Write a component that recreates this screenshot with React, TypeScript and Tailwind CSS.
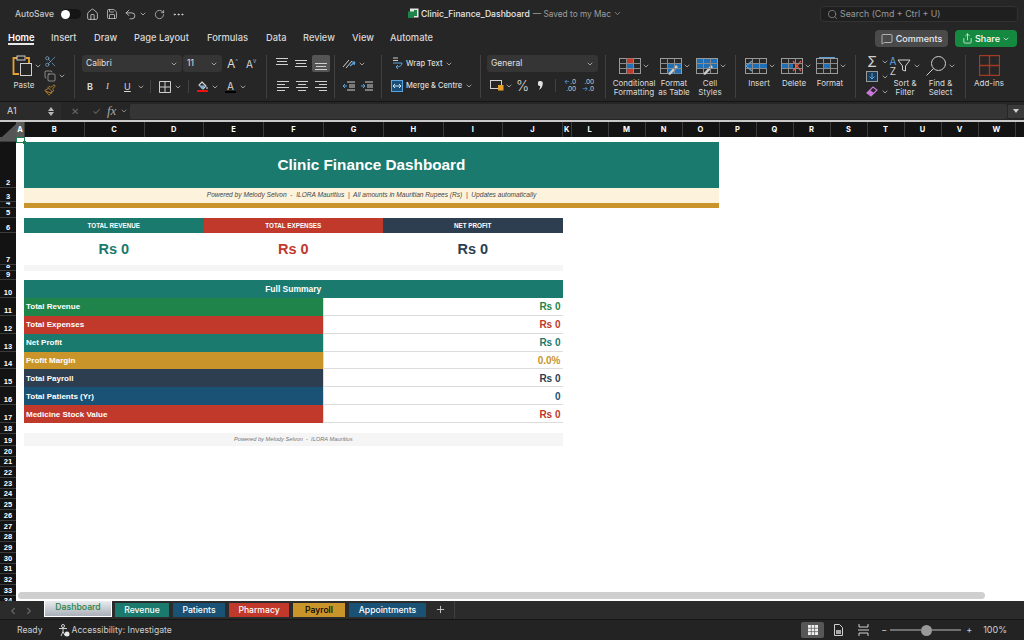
import { ChevronDown, ChevronLeft, ChevronRight, Copy, Ellipsis, House, MessageSquare, Paintbrush, Plus, RotateCw, Save, Scissors, Search, Share, Undo2 } from "lucide-react"
import type { ReactNode } from "react"

const columns = [
  { label: "A", width: "w-[9px] bg-[#5a5a5a]" },
  { label: "B", width: "w-[59.5px]" },
  { label: "C", width: "w-[60px]" },
  { label: "D", width: "w-[59.5px]" },
  { label: "E", width: "w-[60px]" },
  { label: "F", width: "w-[60px]" },
  { label: "G", width: "w-[60px]" },
  { label: "H", width: "w-[59.5px]" },
  { label: "I", width: "w-[59.5px]" },
  { label: "J", width: "w-[60px]" },
  { label: "K", width: "w-[8.5px]" },
  { label: "L", width: "w-[37px]" },
  { label: "M", width: "w-[37px]" },
  { label: "N", width: "w-[37px]" },
  { label: "O", width: "w-[37px]" },
  { label: "P", width: "w-[37px]" },
  { label: "Q", width: "w-[37px]" },
  { label: "R", width: "w-[37px]" },
  { label: "S", width: "w-[37px]" },
  { label: "T", width: "w-[37px]" },
  { label: "U", width: "w-[37px]" },
  { label: "V", width: "w-[37px]" },
  { label: "W", width: "w-[37px]" },
  { label: "", width: "w-[10px]" },
]

const rowHeights = [
  "h-[5px]", "h-[46px]", "h-[14px]", "h-[6px]", "h-[10px]", "h-[15px]", "h-[32px]", "h-[6px]", "h-[9px]", "h-[18px]",
  "h-[17.86px]", "h-[17.86px]", "h-[17.86px]", "h-[17.86px]", "h-[17.86px]", "h-[17.86px]", "h-[17.86px]",
  "h-[10.5px]", "h-[12.5px]",
  "h-[10.7px]", "h-[10.7px]", "h-[10.7px]", "h-[10.7px]", "h-[10.7px]", "h-[10.7px]", "h-[10.7px]", "h-[10.7px]",
  "h-[10.7px]", "h-[10.7px]", "h-[10.7px]", "h-[10.7px]", "h-[10.7px]", "h-[10.7px]", "h-[10.7px]",
]

const summary = [
  { label: "Total Revenue", value: "Rs 0", bg: "bg-[#1e8449]", text: "text-[#1e8449]" },
  { label: "Total Expenses", value: "Rs 0", bg: "bg-[#c0392b]", text: "text-[#c0392b]" },
  { label: "Net Profit", value: "Rs 0", bg: "bg-[#1a7a6e]", text: "text-[#1a7a6e]" },
  { label: "Profit Margin", value: "0.0%", bg: "bg-[#c9952a]", text: "text-[#c9952a]" },
  { label: "Total Payroll", value: "Rs 0", bg: "bg-[#2c3e50]", text: "text-[#2c3e50]" },
  { label: "Total Patients (Yr)", value: "0", bg: "bg-[#1a5276]", text: "text-[#1a5276]" },
  { label: "Medicine Stock Value", value: "Rs 0", bg: "bg-[#c0392b]", text: "text-[#c0392b]" },
]

const tabs = [
  { label: "Revenue", cls: "w-[54px] bg-[#1a7a6e] text-white" },
  { label: "Patients", cls: "w-[52px] bg-[#1a5276] text-white" },
  { label: "Pharmacy", cls: "w-[60px] bg-[#c0392b] text-white" },
  { label: "Payroll", cls: "w-[52px] bg-[#c9952a] text-black" },
  { label: "Appointments", cls: "w-[77px] bg-[#1a5276] text-white" },
]

const tabLabels = ["Home", "Insert", "Draw", "Page Layout", "Formulas", "Data", "Review", "View", "Automate"]

function Chev({ className = "" }: { className?: string }) {
  return <ChevronDown size={8} strokeWidth={2} className={`shrink-0 text-[#d8d8d8] ${className}`} />
}

function Sep() {
  return <div className="w-px h-[43px] shrink-0 bg-[#414141]" />
}

function Label({ children }: { children: ReactNode }) {
  return <div className="text-[8px] leading-[9px] text-center text-[#dcdcdc] whitespace-nowrap">{children}</div>
}

function Lines({ align }: { align: "l" | "c" | "r" }) {
  const xs = align === "l" ? [2, 2, 2, 2] : align === "c" ? [2, 4, 2, 4] : [2, 6, 2, 6]
  return (
    <svg width="16" height="14" viewBox="0 0 16 14" className="text-[#cfcfcf]">
      {[2, 5, 8, 11].map((y, i) => (
        <rect key={y} x={xs[i]} y={y} width={i % 2 === 0 ? 12 : 8} height="1" fill="currentColor" />
      ))}
    </svg>
  )
}

function VLines({ pos }: { pos: "t" | "m" | "b" }) {
  const top = pos === "t" ? 1 : pos === "m" ? 3 : 6
  return (
    <svg width="14" height="13" viewBox="0 0 14 13" className="text-[#cfcfcf]">
      {[0, 3, 6].map((d, i) => (
        <rect key={d} x={i === 1 ? 2 : 1} y={top + d} width={i === 1 ? 10 : 12} height="1" fill="currentColor" />
      ))}
    </svg>
  )
}

function GridBase({ children }: { children?: ReactNode }) {
  return (
    <svg width="22" height="18" viewBox="0 0 22 18" className="shrink-0">
      <rect x="0.5" y="1.5" width="21" height="15" fill="none" stroke="#9a9a9a" />
      {children}
      <path d="M7.5 1.5v15M14.5 1.5v15M.5 6.5h21M.5 11.5h21" stroke="#8a8a8a" fill="none" />
    </svg>
  )
}

function LargeButton({ icon, lines, width, pad = "" }: { icon: ReactNode; lines: string[]; width: string; pad?: string }) {
  return (
    <div className={`${width} shrink-0 flex flex-col items-center`}>
      <div className={`h-[21px] flex items-center gap-[1px] ${pad}`}>
        {icon}
        <Chev />
      </div>
      <div className="mt-[3px]">
        {lines.map((l) => (
          <Label key={l}>{l}</Label>
        ))}
      </div>
    </div>
  )
}

function TitleBar() {
  return (
    <div className="h-[26px] pt-[2px] flex items-center text-[#dcdcdc]">
      <span className="ml-[15px] text-[8.5px] font-medium text-[#c8c8c8]">AutoSave</span>
      <div className="ml-[7px] w-[20px] h-[10px] rounded-full bg-[#151515] flex items-center">
        <div className="w-[9px] h-[9px] rounded-full bg-white" />
      </div>
      <House size={13} strokeWidth={1.4} className="ml-[5px]" />
      <Save size={12} strokeWidth={1.4} className="ml-[7px]" />
      <Undo2 size={13} strokeWidth={1.4} className="ml-[6px]" />
      <ChevronDown size={8} className="ml-[2px]" />
      <RotateCw size={11} strokeWidth={1.4} className="ml-[7px]" />
      <Ellipsis size={13} strokeWidth={1.6} className="ml-[7px]" />
      <div className="ml-[223px] flex items-center">
        <svg width="11" height="11" viewBox="0 0 11 11">
          <rect x="2" y="0.5" width="8.5" height="9" fill="#e8e8e8" />
          <rect x="6" y="2" width="3" height="6" fill="#1e8449" />
          <rect x="0" y="3.5" width="6" height="6.5" fill="#1e8449" />
        </svg>
        <span className="ml-[2px] text-[8.6px] font-medium text-[#e6e6e6]">Clinic_Finance_Dashboard</span>
        <span className="ml-[3px] text-[8.3px] text-[#9e9e9e]">— Saved to my Mac</span>
        <ChevronDown size={9} className="ml-[2px] text-[#9e9e9e]" />
      </div>
      <div className="ml-auto mr-[6px] w-[198px] h-[16px] rounded-[4px] border border-[#333] bg-[#1f1f1f] flex items-center">
        <Search size={11} strokeWidth={1.5} className="ml-[6px] text-[#9a9a9a]" />
        <span className="ml-[2px] text-[8.8px] text-[#9a9a9a]">Search (Cmd + Ctrl + U)</span>
      </div>
    </div>
  )
}

function TabRow() {
  const widths = ["w-[43px]", "w-[43px]", "w-[40px]", "w-[73px]", "w-[59px]", "w-[37px]", "w-[49px]", "w-[38px]", "w-[60px]"]
  return (
    <div className="h-[22px] flex items-start">
      <div className="ml-[8px] flex">
        {tabLabels.map((t, i) => (
          <div key={t} className={`${widths[i]} shrink-0 flex flex-col`}>
            <span className={`text-[9.3px] leading-[23px] h-[22px] ${i === 0 ? "font-semibold text-white" : "font-medium text-[#d8d8d8]"}`}>{t}</span>
            {i === 0 && <div className="-mt-[5px] w-[26px] h-[2px] bg-[#e8e8e8]" />}
          </div>
        ))}
      </div>
      <div className="ml-auto mr-[7px] flex items-center gap-[7px] mt-[4px]">
        <div className="w-[73px] h-[17px] rounded-[4px] bg-[#4a4a4a] flex items-center justify-center gap-[3px] text-[#eaeaea]">
          <MessageSquare size={12} strokeWidth={1.3} />
          <span className="text-[9px] font-medium">Comments</span>
        </div>
        <div className="w-[62px] h-[17px] rounded-[4px] bg-[#15893f] flex items-center justify-center gap-[2px] text-white">
          <Share size={11} strokeWidth={1.5} />
          <span className="text-[9px] font-medium">Share</span>
          <ChevronDown size={8} />
        </div>
      </div>
    </div>
  )
}

function Select({ label, width }: { label: string; width: string }) {
  return (
    <div className={`${width} h-[17px] rounded-[3px] bg-[#353535] flex items-center justify-between px-[4px] text-[8.5px] text-[#e0e0e0] shrink-0`}>
      <span>{label}</span>
      <Chev />
    </div>
  )
}

function Ribbon() {
  return (
    <div className="h-[53px] flex items-start pt-[7px]">
      {/* clipboard */}
      <div className="w-[74px] shrink-0 flex pl-[12px]">
        <div className="w-[30px] shrink-0">
          <div className="flex items-center h-[21px]">
            <svg width="21" height="22" viewBox="0 0 21 22" className="shrink-0">
              <path d="M5 3H1.500v16H7M14 3h3v5" fill="none" stroke="#e8a030" strokeWidth="1.800" />
              <rect x="5" y="1" width="8" height="4" fill="none" stroke="#cfcfcf" />
              <rect x="8.500" y="8.500" width="11" height="12" fill="#262626" stroke="#cfcfcf" />
            </svg>
            <Chev className="ml-[1px]" />
          </div>
          <div className="w-[24px] mt-[5px]">
            <Label>Paste</Label>
          </div>
        </div>
        <div className="ml-[1px] flex flex-col gap-[2px] text-[#cfcfcf]">
          <Scissors size={13} strokeWidth={1.2} className="ml-[1px] text-[#7fb2dc]" />
          <div className="flex items-center">
            <Copy size={12} strokeWidth={1.2} className="ml-[1px]" />
            <Chev className="ml-[2px]" />
          </div>
          <Paintbrush size={12} strokeWidth={1.4} className="ml-[1px] text-[#e8a030]" />
        </div>
      </div>
      <Sep />
      {/* font */}
      <div className="w-[191px] shrink-0 pl-[7px] text-[#d8d8d8]">
        <div className="flex items-center">
          <Select label="Calibri" width="w-[100px]" />
          <div className="w-px" />
          <Select label="11" width="w-[39px]" />
          <span className="ml-[5px] text-[12px] leading-none">A</span>
          <span className="text-[6px] text-[#7fb2dc] -mt-[6px]">^</span>
          <span className="ml-[8px] text-[10px] leading-none">A</span>
          <span className="text-[6px] text-[#7fb2dc] -mt-[6px]">v</span>
        </div>
        <div className="mt-[6px] flex items-center h-[17px] text-[9px]">
          <span className="ml-[5px] w-[18px] font-bold">B</span>
          <span className="ml-[1px] w-[18px] italic" style={{ fontFamily: "Liberation Serif, serif" }}>I</span>
          <span className="underline w-[12px]">U</span>
          <Chev className="ml-[1px]" />
          <div className="ml-[5px] w-px h-[13px] bg-[#414141]" />
          <svg width="12" height="12" viewBox="0 0 12 12" className="ml-[8px]">
            <path d="M.5.5h11v11H.5zM6 .5v11M.5 6h11" fill="none" stroke="#cfcfcf" />
          </svg>
          <Chev className="ml-[3px]" />
          <div className="ml-[6px] w-px h-[13px] bg-[#414141]" />
          <div className="ml-[8px] flex flex-col items-center">
            <svg width="11" height="9" viewBox="0 0 11 9">
              <path d="M5 1l4 4-3 3-4-4zM10 6v2" fill="none" stroke="#dcdcdc" strokeWidth="1.1" />
              <path d="M2 4.500h6l-2 3.500-1 0z" fill="#7fb2dc" />
            </svg>
            <div className="w-[11px] h-[2px] bg-[#ee1111]" />
          </div>
          <Chev className="ml-[3px]" />
          <div className="ml-[6px] flex flex-col items-center">
            <span className="text-[10px] leading-[10px]">A</span>
            <div className="w-[11px] h-[2px] bg-black" />
          </div>
          <Chev className="ml-[3px]" />
        </div>
      </div>
      <Sep />
      {/* alignment */}
      <div className="w-[67px] shrink-0 pl-[8px]">
        <div className="flex items-center gap-[4px] h-[17px]">
          <VLines pos="t" />
          <div className="ml-[1px]"><VLines pos="m" /></div>
          <div className="w-[18px] h-[17px] bg-[#555] rounded-[2px] flex items-center justify-center">
            <VLines pos="b" />
          </div>
        </div>
        <div className="mt-[5px] flex items-center gap-[3px] h-[17px]">
          <Lines align="l" />
          <Lines align="c" />
          <Lines align="r" />
        </div>
      </div>
      <Sep />
      {/* orientation */}
      <div className="w-[46px] shrink-0 pl-[7px]">
        <div className="flex items-center h-[17px] gap-[1px]">
          <svg width="15" height="13" viewBox="0 0 15 13">
            <path d="M1 10L7 3M4 11l6-7" stroke="#cfcfcf" fill="none" />
            <path d="M8 9l5-4M13 5l-3 0M13 5l-1 3" stroke="#5aa5e0" fill="none" strokeWidth="1.2" />
          </svg>
          <Chev />
        </div>
        <div className="mt-[5px] flex items-center h-[17px] gap-[4px]">
          {[0, 1].map((k) => (
            <svg key={k} width="14" height="12" viewBox="0 0 14 12">
              <path d="M5 2h8M7 5h6M7 7h6M5 10h8" stroke="#cfcfcf" fill="none" />
              <path d={k === 0 ? "M5 6H1M1 6l2-2M1 6l2 2" : "M1 6h4M5 6L3 4M5 6L3 8"} stroke="#5aa5e0" fill="none" />
            </svg>
          ))}
        </div>
      </div>
      <Sep />
      {/* wrap and merge */}
      <div className="w-[98px] shrink-0 pl-[9px] text-[7.5px] font-medium text-[#dcdcdc]">
        <div className="flex items-center h-[17px]">
          <svg width="12" height="13" viewBox="0 0 12 13" className="shrink-0">
            <path d="M2 6h9M11 6c0 3-3 4-6 4M5 10l2-2M5 10l2 2" fill="none" stroke="#5aa5e0" />
            <path d="M2 1h5M2 3.500h5" stroke="#cfcfcf" />
          </svg>
          <span className="ml-[3px]">Wrap Text</span>
          <Chev className="ml-[3px]" />
        </div>
        <div className="mt-[5px] flex items-center h-[17px]">
          <svg width="12" height="12" viewBox="0 0 12 12" className="shrink-0">
            <rect x=".5" y=".5" width="11" height="11" fill="#1a4e78" stroke="#5aa5e0" />
            <path d="M2 6h8M2 6l2-2M2 6l2 2M10 6L8 4M10 6L8 8" stroke="#cfe4f5" fill="none" />
          </svg>
          <span className="ml-[3px]">Merge &amp; Centre</span>
          <Chev className="ml-[3px]" />
        </div>
      </div>
      <Sep />
      {/* number */}
      <div className="w-[124px] shrink-0 pl-[6px] text-[#d8d8d8]">
        <Select label="General" width="w-[111px]" />
        <div className="mt-[5px] flex items-center h-[17px]">
          <svg width="14" height="11" viewBox="0 0 14 11" className="ml-[3px]">
            <rect x=".5" y=".5" width="11" height="8" fill="none" stroke="#cfcfcf" />
            <rect x="8" y="5" width="5.500" height="5.500" fill="#e8a030" />
          </svg>
          <Chev className="ml-[1px]" />
          <span className="ml-[3px] text-[14px] font-light leading-none">%</span>
          <svg width="5" height="9" viewBox="0 0 5 9" className="ml-[9px]">
            <path d="M2.500 0a2.300 2.300 0 0 1 2.300 2.500C4.800 5 3.500 7.500 1 9c1-2 1.300-3 1-4A2.500 2.500 0 0 1 2.500 0z" fill="#e0e0e0" />
          </svg>
          <div className="ml-[12px] w-px h-[13px] bg-[#414141]" />
          <div className="ml-[6px] w-[14px] text-[6.5px] leading-[6.5px] text-right">
            <span className="text-[#5aa5e0]">←</span>.0<br />.00
          </div>
          <div className="ml-[4px] w-[14px] text-[6.5px] leading-[6.5px] text-right">
            .00<br /><span className="text-[#5aa5e0]">→</span>.0
          </div>
        </div>
      </div>
      <Sep />
      {/* styles */}
      <div className="w-[129px] shrink-0 flex pl-[4px]">
        <LargeButton
          width="w-[48px]"
          lines={["Conditional", "Formatting"]}
          icon={
            <GridBase>
              <rect x="7" y="1.500" width="8" height="5" fill="#c0392b" />
              <rect x="7" y="6.500" width="8" height="5" fill="#1e6fb5" />
              <rect x="7" y="11.500" width="8" height="5" fill="#c0392b" />
            </GridBase>
          }
        />
        <LargeButton
          width="w-[32px]"
          pad="pl-[2px]"
          lines={["Format", "as Table"]}
          icon={
            <GridBase>
              <rect x="7" y="6.500" width="14" height="10" fill="#1e6fb5" />
              <path d="M8 17l8-9 2 2-8 8z" fill="#cfcfcf" />
            </GridBase>
          }
        />
        <LargeButton
          width="w-[40px]"
          pad="pl-[2px]"
          lines={["Cell", "Styles"]}
          icon={
            <GridBase>
              <rect x="1" y="2" width="20" height="9" fill="#1e6fb5" />
              <path d="M7 17l8-9 2 2-8 8z" fill="#cfcfcf" />
            </GridBase>
          }
        />
      </div>
      <Sep />
      {/* cells */}
      <div className="w-[119px] shrink-0 flex">
        <LargeButton
          width="w-[46px]"
          pad="pl-[2px]"
          lines={["Insert"]}
          icon={
            <GridBase>
              <rect x="3" y="6.500" width="19" height="5" fill="#1e6fb5" />
              <path d="M7 4L1 9l6 5" fill="none" stroke="#5aa5e0" strokeWidth="1.400" />
            </GridBase>
          }
        />
        <LargeButton
          width="w-[24px]"
          pad="pl-[4px]"
          lines={["Delete"]}
          icon={
            <GridBase>
              <rect x="1" y="6.500" width="11" height="5" fill="#1e6fb5" />
              <path d="M12 4l8 10M20 4l-8 10" stroke="#e25545" strokeWidth="1.300" />
            </GridBase>
          }
        />
        <LargeButton
          width="w-[48px]"
          pad="pl-[2px]"
          lines={["Format"]}
          icon={
            <GridBase>
              <rect x="7" y="6.500" width="8" height="5" fill="#1e6fb5" />
              <path d="M3 .5h16" stroke="#5aa5e0" />
            </GridBase>
          }
        />
      </div>
      <Sep />
      {/* editing */}
      <div className="w-[109px] shrink-0 flex pl-[10px]">
        <div className="w-[25px] shrink-0 flex flex-col gap-[2px] text-[#cfcfcf]">
          <div className="flex items-center h-[13px]">
            <span className="text-[14px] w-[12px] leading-none text-center">Σ</span>
            <Chev className="ml-[3px]" />
          </div>
          <div className="flex items-center h-[13px]">
            <svg width="12" height="11" viewBox="0 0 12 11">
              <rect x=".5" y=".5" width="11" height="10" fill="#1a3d5c" stroke="#9a9a9a" />
              <path d="M6 2v6M3.500 5.500L6 8l2.500-2.500" stroke="#5aa5e0" fill="none" />
            </svg>
            <Chev className="ml-[3px]" />
          </div>
          <div className="flex items-center h-[13px]">
            <svg width="12" height="11" viewBox="0 0 12 11">
              <path d="M1 7l6-6 4 3-6 6z" fill="none" stroke="#c879d8" strokeWidth="1.200" />
              <path d="M1 7l3-3 4 3-3 3z" fill="#c879d8" />
            </svg>
            <Chev className="ml-[3px]" />
          </div>
        </div>
        <div className="w-[36px] shrink-0 ml-[-4px] flex flex-col items-center">
          <div className="h-[21px] flex items-center">
            <div className="flex flex-col text-[10px] leading-[10px] w-[8px] text-center">
              <span className="text-[#5aa5e0]">A</span>
              <span className="text-[#cfcfcf]">Z</span>
            </div>
            <svg width="14" height="15" viewBox="0 0 14 15">
              <path d="M1 2h12L8.500 8v5l-3-1V8z" fill="none" stroke="#cfcfcf" />
            </svg>
            <Chev className="ml-[2px]" />
          </div>
          <div className="mt-[3px]">
            <Label>Sort &amp;</Label>
            <Label>Filter</Label>
          </div>
        </div>
        <LargeButton
          width="w-[35px]"
          lines={["Find &", "Select"]}
          icon={
            <svg width="22" height="22" viewBox="0 0 22 22" className="shrink-0">
              <circle cx="13.500" cy="8.500" r="7" fill="none" stroke="#cfcfcf" />
              <path d="M8.500 13.500L1.500 20.500" stroke="#cfcfcf" />
            </svg>
          }
        />
      </div>
      <Sep />
      {/* add-ins */}
      <div className="w-[46px] shrink-0 flex flex-col items-center">
        <div className="h-[21px] flex items-center">
          <svg width="21" height="21" viewBox="0 0 21 21">
            <path d="M.5.5h20v20H.5zM10.500.5v20M.5 10.500h20" fill="none" stroke="#a33a22" strokeWidth="1.300" />
          </svg>
        </div>
        <div className="mt-[3px]">
          <Label>Add-ins</Label>
        </div>
      </div>
    </div>
  )
}

function FormulaBar() {
  return (
    <div className="h-[19px] flex items-center bg-[#262626] border-t border-[#151515]">
      <div className="w-[61px] h-[18px] bg-[#2b2b2b] flex items-center justify-between px-[7px] text-[9px] text-[#dcdcdc]">
        <span>A1</span>
        <div className="flex flex-col gap-[1px]">
          <div className="w-0 h-0 border-x-[3px] border-x-transparent border-b-[4px] border-b-[#b8b8b8]" />
          <div className="w-0 h-0 border-x-[3px] border-x-transparent border-t-[4px] border-t-[#b8b8b8]" />
        </div>
      </div>
      <span className="ml-[10px] w-[21px] text-[10px] text-[#6a6a6a]">✕</span>
      <span className="w-[12px] text-[10px] text-[#6a6a6a]">✓</span>
      <span className="ml-[3px] w-[12px] text-[13px] italic text-[#a8a8a8]" style={{ fontFamily: "Liberation Serif, serif" }}>fx</span>
      <ChevronDown size={8} className="ml-[1px] text-[#b8b8b8]" />
      <div className="ml-[2px] w-[878px] h-[15px] rounded-[2px] bg-[#353535]" />
      <div className="ml-[1px] w-[16px] h-[13px] bg-[#3a3a3a] flex items-center justify-center">
        <div className="w-0 h-0 border-x-[3px] border-x-transparent border-t-[4px] border-t-[#d0d0d0]" />
      </div>
    </div>
  )
}

function ColumnHeaders() {
  return (
    <div className="h-[17px] flex bg-[#131313] border-t-2 border-[#c8c8c8]">
      <div className="w-[16px] shrink-0 flex items-end justify-end bg-[#131313]">
        <div className="w-0 h-0 border-l-[14px] border-l-transparent border-b-[13px] border-b-[#555]" />
      </div>
      {columns.map((c) => (
        <div key={c.label + c.width} className={`${c.width} shrink-0 flex items-center justify-center border-r border-[#3c3c3c] text-[7.5px] font-bold text-white`}>
          {c.label}
        </div>
      ))}
    </div>
  )
}

function RowHeaders() {
  return (
    <div className="w-[16px] shrink-0 h-full overflow-hidden bg-[#131313]">
      {rowHeights.map((h, i) => (
        <div key={i} className={`${h} overflow-hidden flex items-end justify-center border-b border-[#3c3c3c] text-[7.5px] leading-[9px] font-bold text-white ${i === 0 ? "bg-[#555]" : ""}`}>
          {i === 0 ? "" : i + 1}
        </div>
      ))}
    </div>
  )
}

function KpiCard({ title, value, bg, text }: { title: string; value: string; bg: string; text: string }) {
  return (
    <div className="flex-1">
      <div className={`${bg} h-[15px] flex items-center justify-center text-[6.3px] font-bold text-white`}>{title}</div>
      <div className={`h-[32px] pt-[1px] flex items-center justify-center text-[14.500px] font-bold ${text}`}>{value}</div>
    </div>
  )
}

function Sheet() {
  return (
    <div className="h-[464px] flex relative bg-white overflow-hidden" style={{ fontFamily: "Liberation Sans, Arial, sans-serif" }}>
      <RowHeaders />
      <div className="flex-1 pl-[8px] pt-[5px]">
        <div className="w-[695px]">
          <div className="h-[46px] pt-[1px] bg-[#1a7a6e] flex items-center justify-center text-[15.300px] font-bold text-white">Clinic Finance Dashboard</div>
          <div className="h-[14px] bg-[#fdf3dc] flex items-center justify-center text-[6.600px] italic text-[#444] whitespace-pre">
            {"Powered by Melody Selvon  -  ILORA Mauritius  |  All amounts in Mauritian Rupees (Rs)  |  Updates automatically"}
          </div>
          <div className="h-[6px] bg-[#c9952a] border-t border-[#fdf3dc]" />
        </div>
        <div className="w-[538.500px] mt-[10px]">
          <div className="flex">
            <KpiCard title="TOTAL REVENUE" value="Rs 0" bg="bg-[#1a7a6e]" text="text-[#1a7a6e]" />
            <KpiCard title="TOTAL EXPENSES" value="Rs 0" bg="bg-[#c0392b]" text="text-[#c0392b]" />
            <KpiCard title="NET PROFIT" value="Rs 0" bg="bg-[#2c3e50]" text="text-[#2c3e50]" />
          </div>
          <div className="h-[6px] bg-[#f5f5f5]" />
          <div className="mt-[9px] h-[18px] bg-[#1a7a6e] flex items-center justify-center text-[8.500px] font-bold text-white">Full Summary</div>
          {summary.map((r) => (
            <div key={r.label} className="h-[17.860px] flex">
              <div className={`${r.bg} w-[299px] pt-[1px] flex items-center pl-[2px] text-[8px] font-bold text-white`}>{r.label}</div>
              <div className={`flex-1 pt-[1px] flex items-center justify-end pr-[2px] text-[10px] font-bold border-b border-l border-[#dcdcdc] ${r.text}`}>{r.value}</div>
            </div>
          ))}
          <div className="mt-[10px] h-[13px] bg-[#f5f5f5] flex items-center justify-center text-[5.700px] italic text-[#777] whitespace-pre">
            {"Powered by Melody Selvon  -  ILORA Mauritius"}
          </div>
        </div>
      </div>
      {/* A1 selection */}
      <div className="absolute left-[16px] top-0 w-[9px] h-[6px] border border-[#1e7b52]" />
      <div className="absolute left-[23px] top-[4px] w-[3px] h-[3px] bg-[#1e7b52]" />
      {/* scroll bar */}
      <div className="absolute left-[18px] top-[455px] w-[967px] h-[7px] rounded-full bg-[#cfcfcf]" />
    </div>
  )
}

function SheetTabs() {
  return (
    <div className="h-[19px] flex items-start bg-[#2b2b2b] border-b border-[#161616]">
      <ChevronLeft size={10} strokeWidth={3} className="ml-[8px] mt-[5px] text-[#666]" />
      <ChevronRight size={10} strokeWidth={3} className="ml-[6px] mt-[5px] text-[#666]" />
      <div className="ml-[10px] -mt-px w-[68px] h-[17px] border border-white border-t-0 bg-gradient-to-b from-[#eef0f2] to-[#aab0b8] flex items-center justify-center text-[8.700px] font-medium text-[#1e8449]">
        Dashboard
      </div>
      <div className="ml-[3px] flex gap-[4px] pt-[2px]">
        {tabs.map((t) => (
          <div key={t.label} className={`${t.cls} h-[14px] flex items-center justify-center text-[8.600px] font-medium`}>
            {t.label}
          </div>
        ))}
      </div>
      <div className="w-[28px] h-[17px] flex items-center justify-center text-[#cfcfcf] border-r border-[#414141] ml-[1px]">
        <Plus size={11} strokeWidth={2} />
      </div>
    </div>
  )
}

function StatusBar() {
  return (
    <div className="h-[20px] flex items-center bg-[#232323] text-[8.600px] text-[#d0d0d0]">
      <span className="ml-[17px]">Ready</span>
      <svg width="12" height="13" viewBox="0 0 12 13" className="ml-[16px]">
        <circle cx="5" cy="2" r="1.500" fill="none" stroke="#d0d0d0" />
        <path d="M1 4.500h8M5 4.500v3L3 12M5 7.500l2 4" fill="none" stroke="#d0d0d0" />
        <circle cx="9" cy="10" r="2.500" fill="#e8e8e8" />
      </svg>
      <span className="ml-[1px]">Accessibility: Investigate</span>
      <div className="ml-auto w-[23px] h-[16px] rounded-[2px] bg-[#575757] flex items-center justify-center">
        <svg width="10" height="10" viewBox="0 0 10 10">
          <path d="M0 0h10v10H0z" fill="#f0f0f0" />
          <path d="M3.300 0v10M6.600 0v10M0 3.300h10M0 6.600h10" stroke="#575757" strokeWidth=".7" />
        </svg>
      </div>
      <svg width="9" height="12" viewBox="0 0 9 12" className="ml-[10px]">
        <path d="M.5.500h5l3 3v8h-8z" fill="none" stroke="#d0d0d0" />
        <path d="M2 6h5v4H2z" fill="#a8a8a8" />
      </svg>
      <svg width="11" height="12" viewBox="0 0 11 12" className="ml-[15px]">
        <path d="M1 0v3h9V0M1 12V9h9v3M0 6h11" fill="none" stroke="#d0d0d0" />
      </svg>
      <span className="ml-[12px] text-[9px]">−</span>
      <div className="ml-[3px] w-[71px] h-[12px] flex items-center">
        <div className="w-[31px] h-[2px] bg-[#6e6e6e]" />
        <div className="w-[11px] h-[11px] rounded-full bg-[#9a9a9a]" />
        <div className="flex-1 h-[2px] bg-[#6e6e6e]" />
      </div>
      <span className="ml-[5px] text-[9px]">+</span>
      <span className="ml-[11px] mr-[17px] text-[9px]">100%</span>
    </div>
  )
}

export default function App() {
  return (
    <div className="w-[1024px] h-[640px] overflow-hidden bg-[#262626]" style={{ fontFamily: "Inter, sans-serif" }}>
      <TitleBar />
      <TabRow />
      <Ribbon />
      <FormulaBar />
      <ColumnHeaders />
      <Sheet />
      <SheetTabs />
      <StatusBar />
    </div>
  )
}
